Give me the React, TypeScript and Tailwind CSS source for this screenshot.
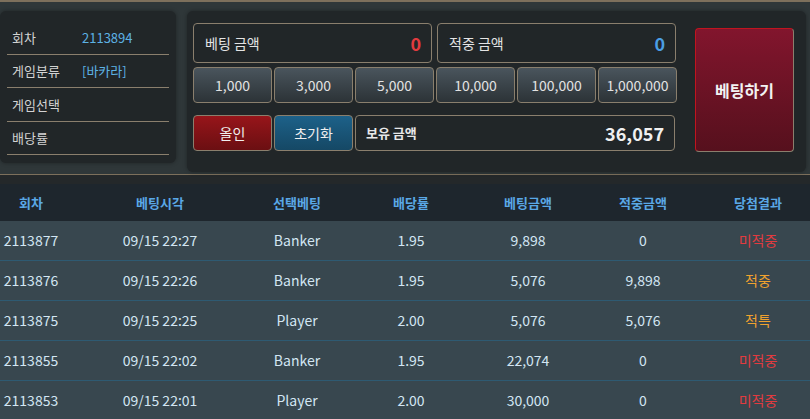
import React from 'react';

const font = { fontFamily: '"Noto Sans CJK KR", "Noto Sans", sans-serif' };

const infoRows = [
  { label: '회차', value: '2113894' },
  { label: '게임분류', value: '[바카라]' },
  { label: '게임선택', value: '' },
  { label: '배당률', value: '' },
];

const chips = ['1,000', '3,000', '5,000', '10,000', '100,000', '1,000,000'];

const history = [
  { round: '2113877', time: '09/15 22:27', pick: 'Banker', odds: '1.95', bet: '9,898', win: '0', result: '미적중' },
  { round: '2113876', time: '09/15 22:26', pick: 'Banker', odds: '1.95', bet: '5,076', win: '9,898', result: '적중' },
  { round: '2113875', time: '09/15 22:25', pick: 'Player', odds: '2.00', bet: '5,076', win: '5,076', result: '적특' },
  { round: '2113855', time: '09/15 22:02', pick: 'Banker', odds: '1.95', bet: '22,074', win: '0', result: '미적중' },
  { round: '2113853', time: '09/15 22:01', pick: 'Player', odds: '2.00', bet: '30,000', win: '0', result: '미적중' },
];

const headers = ['회차', '베팅시각', '선택베팅', '배당률', '베팅금액', '적중금액', '당첨결과'];

const cols = 'grid grid-cols-[62px_196px_78px_150px_84px_146px_84px]';

const resultColor = (r: string) => (r === '미적중' ? 'text-[#e23b3f]' : 'text-[#f0a22e]');

const App: React.FC = () => {
  return (
    <div className="w-[810px] h-[419px] overflow-hidden bg-[#2f3739]" style={font}>
      <div className="h-[2px] bg-[#7d705c]" />

      {/* bet panel */}
      <div className="flex gap-[11px] pt-[9px] pr-[4px] h-[170px] items-start">
        <div className="w-[176px] h-[152px] rounded-md bg-[#212628] shadow-[0_0_4px_rgba(0,0,0,0.35)] px-[7px] pt-[10px]">
          {infoRows.map((row) => (
            <div key={row.label} className="flex items-center h-[33.5px] border-b border-[#8a7f6d] text-[13px]">
              <span className="w-[75px] pl-[5px] text-[#d3d3d3]">{row.label}</span>
              <span className="text-[#5db2e4]">{row.value}</span>
            </div>
          ))}
        </div>

        <div className="flex-1 h-[161px] rounded-md bg-[#212628] shadow-[0_0_4px_rgba(0,0,0,0.35)] flex pl-[6px] pt-[12px]">
          <div className="w-[484px] flex flex-col">
            <div className="flex gap-[5px] h-[40px]">
              <div className="w-[239px] rounded border border-[#8a7f6d] flex items-center justify-between pl-[11px] pr-[10px]">
                <span className="text-[14px] text-[#e4e4e4]">베팅 금액</span>
                <span className="text-[18px] font-bold text-[#e23b3f]">0</span>
              </div>
              <div className="w-[239px] rounded border border-[#8a7f6d] flex items-center justify-between pl-[11px] pr-[10px]">
                <span className="text-[14px] text-[#e4e4e4]">적중 금액</span>
                <span className="text-[18px] font-bold text-[#4b9ee4]">0</span>
              </div>
            </div>

            <div className="flex gap-[2px] mt-[4px] h-[36px]">
              {chips.map((c) => (
                <div
                  key={c}
                  className="w-[79px] rounded border border-[#8a7f6d] bg-gradient-to-b from-[#4a555d] to-[#2c3337] flex items-center justify-center text-[14px] text-[#e2e2e2]"
                >
                  {c}
                </div>
              ))}
            </div>

            <div className="flex gap-[2px] mt-[12px] h-[36px]">
              <div className="w-[79px] rounded border border-[#8a7f6d] bg-gradient-to-b from-[#97151a] to-[#6b0f12] flex items-center justify-center text-[14px] text-[#f0f0f0]">
                올인
              </div>
              <div className="w-[79px] rounded border border-[#8a7f6d] bg-gradient-to-b from-[#1d6189] to-[#154865] flex items-center justify-center text-[14px] text-[#f0f0f0]">
                초기화
              </div>
              <div className="w-[320px] rounded border border-[#8a7f6d] flex items-center justify-between pl-[10px] pr-[10px]">
                <span className="text-[13px] font-bold text-[#e8e8e8]">보유 금액</span>
                <span className="text-[18px] font-bold text-[#f0f0f0]">36,057</span>
              </div>
            </div>
          </div>

          <div className="ml-[18px] mt-[5px] w-[99px] h-[124px] rounded border border-[#8a7f6d] border-t-[#c0151f] border-l-[#c0151f] bg-gradient-to-b from-[#82152d] to-[#56101d] flex items-center justify-center text-[16px] font-bold text-[#f2f2f2]">
            베팅하기
          </div>
        </div>
      </div>

      <div className="mt-[2px] h-px bg-[#7d705c]" />
      <div className="h-[9px] bg-[#24282a]" />

      {/* history table */}
      <div className={`${cols} h-[37px] items-center bg-[#1e262d] text-[13px] font-bold text-[#5aa8e6]`}>
        {headers.map((h) => (
          <div key={h} className="text-center">{h}</div>
        ))}
      </div>
      {history.map((r) => (
        <div key={r.round} className={`${cols} h-[40px] items-center bg-[#38474f] border-b border-[#2e5a72] text-[14px] text-[#d3e6f3]`}>
          <div className="text-center">{r.round}</div>
          <div className="text-center">{r.time}</div>
          <div className="text-center">{r.pick}</div>
          <div className="text-center">{r.odds}</div>
          <div className="text-center">{r.bet}</div>
          <div className="text-center">{r.win}</div>
          <div className={`text-center ${resultColor(r.result)}`}>{r.result}</div>
        </div>
      ))}
    </div>
  );
};

export default App;
